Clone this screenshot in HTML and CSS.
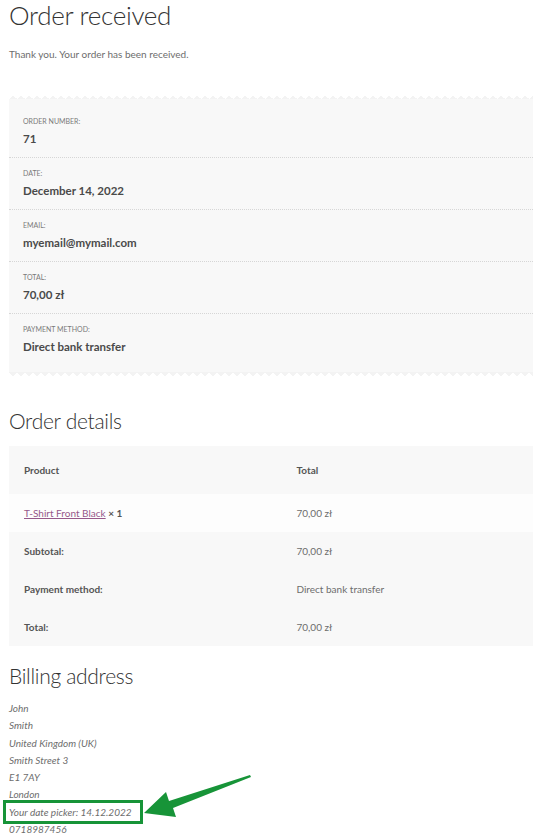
FILE: index.html
```html
<!DOCTYPE html>
<html lang="en">
<head>
    <meta charset="UTF-8">
    <meta name="viewport" content="width=device-width, initial-scale=1.0">
    <title>Order received</title>
    <link rel="stylesheet" href="styles.css">
</head>
<body>
    <div class="page">
        <h1 class="page-title">Order received</h1>
        <p class="thankyou">Thank you. Your order has been received.</p>

        <ul class="order-overview">
            <li>
                <span class="label">Order number:</span>
                <strong>71</strong>
            </li>
            <li>
                <span class="label">Date:</span>
                <strong>December 14, 2022</strong>
            </li>
            <li>
                <span class="label">Email:</span>
                <strong>myemail@mymail.com</strong>
            </li>
            <li>
                <span class="label">Total:</span>
                <strong>70,00 zł</strong>
            </li>
            <li>
                <span class="label">Payment method:</span>
                <strong>Direct bank transfer</strong>
            </li>
        </ul>

        <h2 class="section-title">Order details</h2>
        <table class="order-details">
            <thead>
                <tr>
                    <th class="col-product">Product</th>
                    <th>Total</th>
                </tr>
            </thead>
            <tbody>
                <tr>
                    <td><a href="#">T-Shirt Front Black</a> <strong>× 1</strong></td>
                    <td>70,00 zł</td>
                </tr>
            </tbody>
            <tfoot>
                <tr>
                    <th>Subtotal:</th>
                    <td>70,00 zł</td>
                </tr>
                <tr>
                    <th>Payment method:</th>
                    <td>Direct bank transfer</td>
                </tr>
                <tr>
                    <th>Total:</th>
                    <td>70,00 zł</td>
                </tr>
            </tfoot>
        </table>

        <h2 class="section-title billing-title">Billing address</h2>
        <address class="billing">
            John<br>
            Smith<br>
            United Kingdom (UK)<br>
            Smith Street 3<br>
            E1 7AY<br>
            London<br>
            <span class="highlight">Your date picker: 14.12.2022</span><br>
            0718987456
        </address>

        <svg class="arrow" width="120" height="60" viewBox="0 0 120 60">
            <polygon points="119,3 120,5 42,36 45,45 13,41 35,20 38,29" fill="#179438"/>
        </svg>
    </div>
</body>
</html>
```

FILE: styles.css
```css
* {
    margin: 0;
    padding: 0;
    box-sizing: border-box;
}

body {
    font-family: 'Lato', 'Liberation Sans', sans-serif;
    color: #6d6d6d;
    background: #fff;
}

.page {
    position: relative;
    padding: 0 7px 0 9px;
    height: 838px;
    overflow: hidden;
}

.page-title {
    font-size: 26px;
    font-weight: 300;
    line-height: 30px;
    color: #333;
    letter-spacing: -0.3px;
}

.thankyou {
    font-size: 10px;
    line-height: 16px;
    margin-top: 16px;
}

/* zigzag receipt box */
.order-overview {
    list-style: none;
    background: #f8f8f8;
    margin-top: 33px;
}

.order-overview::before,
.order-overview::after {
    content: '';
    display: block;
    height: 4px;
    background-size: 8px 4px;
    background-repeat: repeat-x;
    background-color: #fff;
}

.order-overview::before {
    background-image: conic-gradient(from 135deg at 50% 0, #f3f3f3 90deg, transparent 0);
    margin-bottom: 7px;
}

.order-overview::after {
    background-image: conic-gradient(from -45deg at 50% 100%, #f3f3f3 90deg, transparent 0);
    margin-top: 7px;
}

.order-overview li {
    padding: 9px 14px 9px;
    border-bottom: 1px dotted #d6d6d6;
}

.order-overview li:last-child {
    border-bottom: none;
}

.order-overview .label {
    display: block;
    font-size: 7px;
    line-height: 12px;
    text-transform: uppercase;
    color: #7a7a7a;
}

.order-overview strong {
    display: block;
    margin-top: 3px;
    font-size: 11.5px;
    line-height: 18px;
    font-weight: 700;
    color: #4a4a4a;
}

.section-title {
    font-size: 21px;
    font-weight: 300;
    line-height: 28px;
    color: #333;
    margin-top: 31px;
    letter-spacing: -0.3px;
}

.order-details {
    width: 100%;
    border-collapse: collapse;
    margin-top: 11px;
    font-size: 10px;
    line-height: 16px;
}

.order-details th,
.order-details td {
    text-align: left;
    padding: 11px 15px;
    font-weight: 400;
}

.order-details th {
    font-weight: 700;
    color: #555;
}

.order-details .col-product {
    width: 52%;
}

.order-details thead th {
    background: #f8f8f8;
    padding: 16px 15px;
}

.order-details tbody td {
    background: #fdfdfd;
}

.order-details tbody a {
    color: #96588a;
    text-decoration: underline;
}

.order-details tbody strong {
    color: #555;
}

.order-details tfoot th,
.order-details tfoot td {
    background: #f8f8f8;
    padding: 11px 15px;
}

.billing-title {
    margin-top: 16px;
}

.billing {
    margin-top: 10px;
    font-size: 10px;
    line-height: 17.3px;
    font-style: italic;
}

.highlight {
    position: relative;
}

.highlight::after {
    content: '';
    position: absolute;
    left: -6px;
    right: -11px;
    top: -6px;
    bottom: -6px;
    border: 3px solid #179438;
}

.arrow {
    position: absolute;
    left: 131px;
    top: 772px;
}
```
